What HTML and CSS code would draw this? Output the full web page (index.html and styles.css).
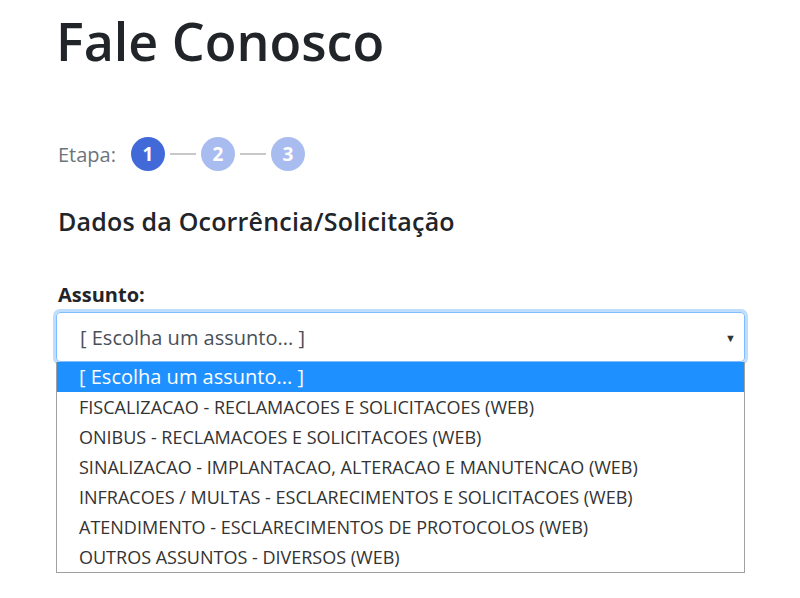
FILE: index.html
```html
<!DOCTYPE html>
<html lang="pt-BR">
<head>
  <meta charset="UTF-8">
  <title>Fale Conosco</title>
  <link rel="stylesheet" href="styles.css">
</head>
<body>
<div class="container">
  <h1>Fale Conosco</h1>

  <div class="etapas">
    <span class="etapa-label">Etapa:</span>
    <span class="passo ativo">1</span>
    <span class="traco"></span>
    <span class="passo">2</span>
    <span class="traco"></span>
    <span class="passo">3</span>
  </div>

  <h4>Dados da Ocorrência/Solicitação</h4>

  <label class="rotulo">Assunto:</label>
  <div class="campo">
    <div class="select">
      <span>[ Escolha um assunto... ]</span>
      <span class="seta">&#9660;</span>
    </div>
    <div class="lista">
      <div class="opcao selecionada">[ Escolha um assunto... ]</div>
      <div class="opcao">FISCALIZACAO - RECLAMACOES E SOLICITACOES (WEB)</div>
      <div class="opcao">ONIBUS - RECLAMACOES E SOLICITACOES (WEB)</div>
      <div class="opcao">SINALIZACAO - IMPLANTACAO, ALTERACAO E MANUTENCAO (WEB)</div>
      <div class="opcao">INFRACOES / MULTAS - ESCLARECIMENTOS E SOLICITACOES (WEB)</div>
      <div class="opcao">ATENDIMENTO - ESCLARECIMENTOS DE PROTOCOLOS (WEB)</div>
      <div class="opcao">OUTROS ASSUNTOS - DIVERSOS (WEB)</div>
    </div>
  </div>
</div>
</body>
</html>
```

FILE: styles.css
```css
body { margin: 0; font-family: "Open Sans", "Noto Sans", sans-serif; color: #212529; background: #fff; }
.container { padding: 0 55px 0 56px; }

h1 { font-size: 52px; font-weight: 600; margin: 0; padding-top: 9px; line-height: 64px; }

/* etapas */
.etapas { display: flex; align-items: center; margin-top: 64px; height: 34px; }
.etapa-label { font-size: 20px; color: #6c757d; margin-left: 2px; margin-right: 15px; }
.passo {
  width: 34px;
  height: 34px;
  border-radius: 50%;
  background: #a9bcf0;
  color: #fff;
  font-weight: bold;
  font-size: 19px;
  display: flex;
  align-items: center;
  justify-content: center;
}
.passo.ativo { background: #4169d8; }
.traco { width: 26px; height: 2px; background: #c8c8c8; margin: 0 5px; }

h4 { font-size: 25px; font-weight: 600; letter-spacing: 0.2px; margin: 34px 0 0 2px; line-height: 32px; }

.rotulo { display: block; font-weight: bold; font-size: 20px; margin: 45px 0 0 2px; line-height: 26px; }

.campo { margin-top: 4px; }
.select {
  height: 48px;
  border: 1px solid #80bdff;
  border-radius: 4px;
  box-shadow: 0 0 0 3px rgba(0,123,255,0.25);
  display: flex;
  align-items: center;
  justify-content: space-between;
  padding: 0 8px 0 23px;
  font-size: 20px;
  color: #495057;
}
.seta { font-size: 11px; color: #333; }

.lista { border: 1px solid #a0a0a0; border-top: none; }
.opcao { font-size: 18px; line-height: 30px; padding-left: 22px; color: #333; white-space: nowrap; }
.selecionada { background: #1e90ff; color: #fff; font-size: 20px; }
```
